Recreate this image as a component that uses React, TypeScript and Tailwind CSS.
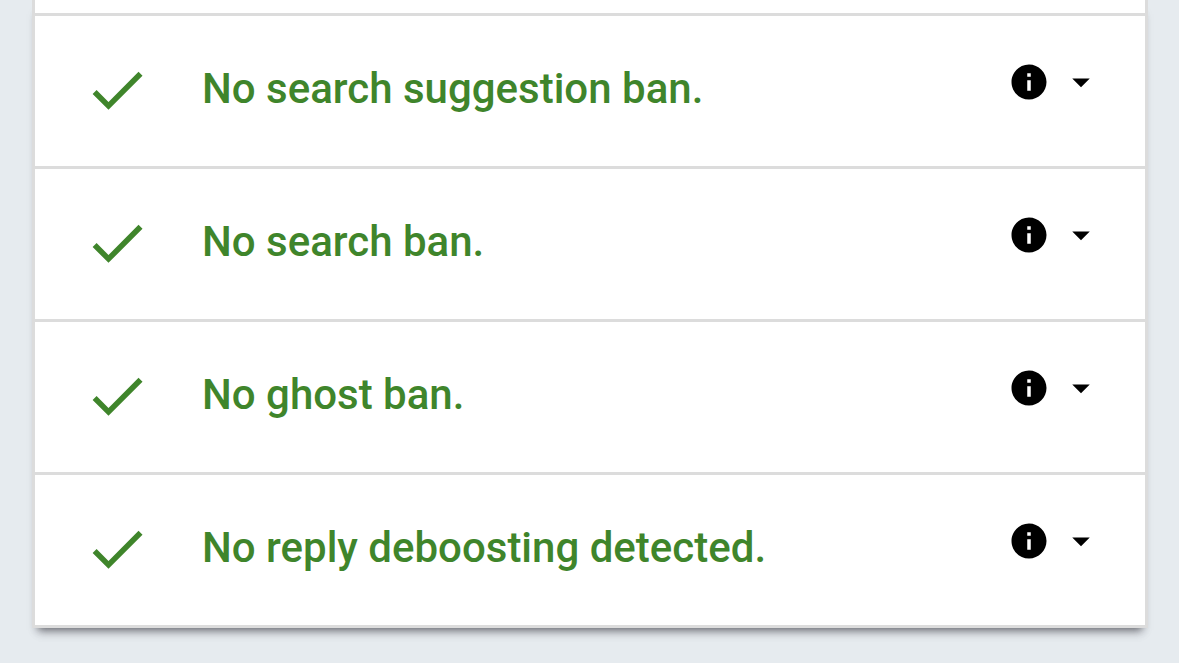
const checks = [
    "No search suggestion ban.",
    "No search ban.",
    "No ghost ban.",
    "No reply deboosting detected.",
];

function CheckIcon() {
    return (
        <svg viewBox="0 0 24 24" className="size-[68px] shrink-0 fill-[#3f852b]" aria-hidden="true">
            <path d="M9 16.2L4.8 12l-1.4 1.4L9 19 21 7l-1.4-1.4L9 16.2z" />
        </svg>
    );
}

function InfoIcon() {
    return (
        <svg viewBox="0 0 24 24" className="size-[42px]" aria-hidden="true">
            <path d="M12 2C6.48 2 2 6.48 2 12s4.48 10 10 10 10-4.48 10-10S17.52 2 12 2zm1 15h-2v-6h2v6zm0-8h-2V7h2v2z" />
        </svg>
    );
}

function ArrowIcon() {
    return (
        <svg viewBox="0 0 24 24" className="size-[42px]" aria-hidden="true">
            <path d="M7 10l5 5 5-5z" />
        </svg>
    );
}

export default function App() {
    return (
        <main className="min-h-screen bg-[#e6ebef] pr-[31px] pb-8 pl-8 font-[Roboto,sans-serif]">
            <ul className="border-x-3 border-b-3 border-[#dcdcdc] bg-white shadow-[0_8px_8px_-6px_rgba(50,50,60,0.65),0_10px_10px_-6px_rgba(50,50,60,0.2)]">
                <li className="h-[13px]" />
                {checks.map((label) => (
                    <li key={label} className="flex h-[153px] items-center border-t-3 border-[#dcdcdc] pr-[43px] pb-0.5 pl-12">
                        <CheckIcon />
                        <h2 className="mb-0.5 ml-[51px] flex-1 text-[42px] leading-[54px] font-medium text-[#3f852b]">
                            {label}
                        </h2>
                        <button type="button" aria-label="Details" className="mb-4 flex items-center gap-[10px]">
                            <InfoIcon />
                            <ArrowIcon />
                        </button>
                    </li>
                ))}
            </ul>
        </main>
    );
}
